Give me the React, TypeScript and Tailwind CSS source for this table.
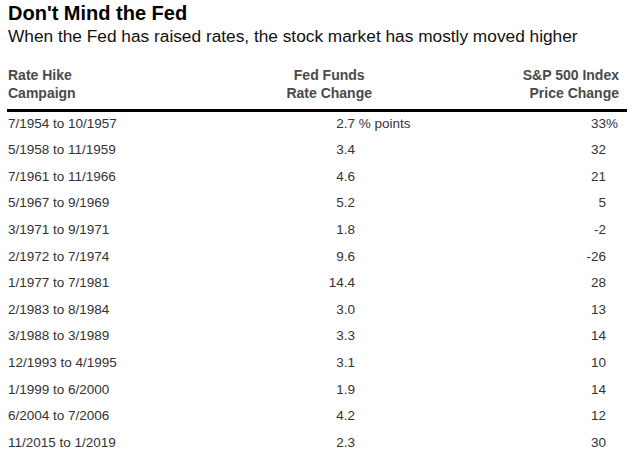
const rows: [string, string, string][] = [
  ["7/1954 to 10/1957", "2.7", "33"],
  ["5/1958 to 11/1959", "3.4", "32"],
  ["7/1961 to 11/1966", "4.6", "21"],
  ["5/1967 to 9/1969", "5.2", "5"],
  ["3/1971 to 9/1971", "1.8", "-2"],
  ["2/1972 to 7/1974", "9.6", "-26"],
  ["1/1977 to 7/1981", "14.4", "28"],
  ["2/1983 to 8/1984", "3.0", "13"],
  ["3/1988 to 3/1989", "3.3", "14"],
  ["12/1993 to 4/1995", "3.1", "10"],
  ["1/1999 to 6/2000", "1.9", "14"],
  ["6/2004 to 7/2006", "4.2", "12"],
  ["11/2015 to 1/2019", "2.3", "30"],
];

export default function App() {
  return (
    <div className="w-[635px] h-[460px] bg-white font-['Liberation_Sans',Arial,sans-serif] overflow-hidden">
      <div className="pl-[7px] w-[627px]">
        <h1 className="pl-px pt-[1px] text-[20px] leading-[24px] font-bold text-black">Don't Mind the Fed</h1>
        <p className="pl-px text-[17.3px] leading-[22px] text-[#111]">
          When the Fed has raised rates, the stock market has mostly moved higher
        </p>

        {/* header */}
        <div className="mt-[19px] flex pl-px pr-[8px] pb-[7px] border-b-[3px] border-black text-[14px] leading-[18px] font-bold text-[#4a4a4a]">
          <div className="flex-1">
            Rate Hike
            <br />
            Campaign
          </div>
          <div className="w-[112px] text-right">
            <div className="inline-block text-center">
              Fed Funds
              <br />
              Rate Change
            </div>
          </div>
          <div className="w-[247px] text-right">
            S&amp;P 500 Index
            <br />
            Price Change
          </div>
        </div>

        {/* rows */}
        <div className="text-[13.5px] text-[#333]">
          {rows.map(([period, fed, sp], i) => (
            <div key={period} className="flex pl-px pr-[8px] pb-[3px] h-[26.6px] items-center">
              <div className="flex-1">{period}</div>
              <div className="w-[112px] flex">
                <div className="w-[95px] text-right">{fed}</div>
                <div className="w-0 whitespace-nowrap">{i === 0 ? "\u00a0% points" : ""}</div>
              </div>
              <div className="w-[247px] flex">
                <div className="w-[234px] text-right">{sp}</div>
                <div className="w-0 whitespace-nowrap">{i === 0 ? "%" : ""}</div>
              </div>
            </div>
          ))}
        </div>
      </div>
    </div>
  );
}
